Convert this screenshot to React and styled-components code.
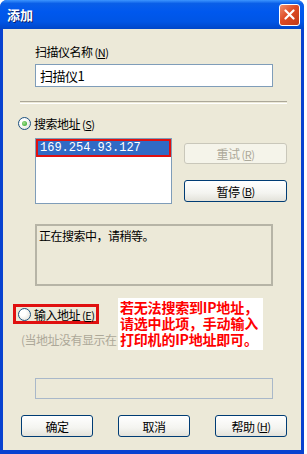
import styled, { createGlobalStyle } from "styled-components";

const GlobalStyle = createGlobalStyle`
  body {
    margin: 0;
    background: #ffffff;
    font-family: "Noto Sans CJK SC", "Liberation Sans", sans-serif;
    font-size: 12px;
    letter-spacing: -0.5px;
  }
`;

const Window = styled.div`
  width: 304px;
  height: 454px;
  display: flex;
  flex-direction: column;
  background: #0842d0;
  border-radius: 7px 7px 0 0;
  overflow: hidden;
`;

const TitleBar = styled.div`
  height: 29px;
  flex: none;
  display: flex;
  align-items: center;
  justify-content: space-between;
  padding: 0 4px 0 7px;
  background: linear-gradient(
    to bottom,
    #3d95ff 0%,
    #0a5fe8 12%,
    #0058ee 40%,
    #0055e5 75%,
    #0046c8 100%
  );
  color: #fff;
  font-weight: bold;
  font-size: 13px;
  letter-spacing: 0;
  text-shadow: 1px 1px 0 #0a1f6a;
`;

const CloseButton = styled.div`
  width: 19px;
  height: 20px;
  border: 1px solid #fff;
  border-radius: 3px;
  background: linear-gradient(135deg, #f08f6e 0%, #de4b24 45%, #c23a17 100%);
  display: flex;
  align-items: center;
  justify-content: center;
`;

const Body = styled.div`
  position: relative;
  flex: 1;
  margin: 0 3px 4px 3px;
  background: #ece9d8;
  display: flex;
  flex-direction: column;
  align-items: flex-start;
`;

const Label = styled.div`
  margin: 16px 0 0 32px;
  line-height: 14px;
  color: #000;
`;

const TextBox = styled.div`
  margin: ${(p) => p.$top}px 0 0 32px;
  width: 238px;
  height: ${(p) => p.$h}px;
  box-sizing: border-box;
  border: 1px solid ${(p) => (p.$disabled ? "#a9b8c9" : "#7f9db9")};
  background: ${(p) => (p.$disabled ? "#ece9d8" : "#fff")};
  padding: 3px 4px;
  line-height: 15px;
  font-size: 13px;
`;

const Separator = styled.div`
  margin: 14px 0 0 17px;
  width: 267px;
  height: 1px;
  border-top: 1px solid #aca899;
  border-bottom: 1px solid #fff;
`;

const RadioRow = styled.div`
  display: flex;
  align-items: center;
  gap: 3px;
  white-space: nowrap;
  margin: ${(p) => p.$top}px 0 0 ${(p) => p.$left}px;
  height: ${(p) => (p.$boxed ? 20 : 14)}px;
  box-sizing: border-box;
  padding: 0 ${(p) => (p.$boxed ? "2px 0 2px" : "0")};
  border: ${(p) => (p.$boxed ? "3px solid #e01010" : "none")};
`;

const RadioCircle = styled.span`
  width: 13px;
  height: 13px;
  flex: none;
  box-sizing: border-box;
  border-radius: 50%;
  border: 1px solid #1c5180;
  background: radial-gradient(circle at 35% 35%, #ffffff 30%, #dcdad0 100%);
  display: flex;
  align-items: center;
  justify-content: center;
  &::after {
    content: "";
    width: 5px;
    height: 5px;
    border-radius: 50%;
    background: ${(p) => (p.$checked ? "radial-gradient(circle at 40% 40%, #a6e08e, #21a121)" : "transparent")};
  }
`;

const Mnemonic = styled.span`
  margin-left: 2px;
  font-size: 11px;
  u {
    text-decoration: underline;
  }
`;

const SearchRow = styled.div`
  display: flex;
  margin: 8px 0 0 32px;
  gap: 12px;
`;

const ListBox = styled.div`
  width: 137px;
  height: 66px;
  box-sizing: border-box;
  border: 1px solid #7f9db9;
  background: #fff;
`;

const SelectedItem = styled.div`
  height: 18px;
  box-sizing: border-box;
  border: 2px solid #e01010;
  background: #316ac5;
  color: #fff;
  padding-left: 2px;
  font-family: "Liberation Mono", monospace;
  font-size: 12px;
  letter-spacing: 0;
  line-height: 14px;
`;

const ButtonColumn = styled.div`
  display: flex;
  flex-direction: column;
  gap: 16px;
  padding-top: 5px;
`;

const Button = styled.div`
  width: ${(p) => p.$w}px;
  height: ${(p) => p.$h}px;
  box-sizing: border-box;
  border-radius: 3px;
  border: 1px solid ${(p) => (p.$disabled ? "#c9c7ba" : "#003c74")};
  background: ${(p) =>
    p.$disabled
      ? "#f5f4ea"
      : "linear-gradient(to bottom, #ffffff 0%, #f4f4f0 60%, #e3e2da 100%)"};
  color: ${(p) => (p.$disabled ? "#aca899" : "#000")};
  display: flex;
  align-items: center;
  justify-content: center;
  font-size: 12px;
`;

const StatusBox = styled.div`
  margin: 20px 0 0 32px;
  width: 238px;
  height: 62px;
  box-sizing: border-box;
  border: 2px solid #b6b4a6;
  padding: 2px 2px;
  line-height: 16px;
  font-size: 12px;
`;

const HintText = styled.div`
  margin: 9px 0 0 18px;
  color: #aca899;
  line-height: 14px;
  white-space: nowrap;
`;

const Footer = styled.div`
  display: flex;
  gap: 25px;
  margin: 16px 0 0 18px;
`;

const Annotation = styled.div`
  position: absolute;
  left: 115px;
  top: 269px;
  width: 143px;
  padding: 1px 0 3px 2px;
  background: #fff;
  color: #ff0000;
  font-family: "Noto Sans CJK SC", serif;
  font-weight: bold;
  font-size: 14px;
  line-height: 16px;
  letter-spacing: -0.2px;
`;

const CloseIcon = () => (
  <svg width="11" height="11" viewBox="0 0 11 11">
    <path d="M1.5 1.5 L9.5 9.5 M9.5 1.5 L1.5 9.5" stroke="#fff" strokeWidth="2.2" strokeLinecap="round" />
  </svg>
);

const App = () => {
  return (
    <>
      <GlobalStyle />
      <Window>
        <TitleBar>
          <span>添加</span>
          <CloseButton>
            <CloseIcon />
          </CloseButton>
        </TitleBar>
        <Body>
          <Label>
            扫描仪名称<Mnemonic>(<u>N</u>)</Mnemonic>
          </Label>
          <TextBox $top={5} $h={23}>扫描仪1</TextBox>
          <Separator />
          <RadioRow $top={12} $left={15}>
            <RadioCircle $checked />
            <span>
              搜索地址<Mnemonic>(<u>S</u>)</Mnemonic>
            </span>
          </RadioRow>
          <SearchRow>
            <ListBox>
              <SelectedItem>169.254.93.127</SelectedItem>
            </ListBox>
            <ButtonColumn>
              <Button $w={103} $h={21} $disabled>
                重试<Mnemonic>(<u>R</u>)</Mnemonic>
              </Button>
              <Button $w={103} $h={22}>
                暂停<Mnemonic>(<u>B</u>)</Mnemonic>
              </Button>
            </ButtonColumn>
          </SearchRow>
          <StatusBox>正在搜索中，请稍等。</StatusBox>
          <RadioRow $top={18} $left={10} $boxed>
            <RadioCircle />
            <span>
              输入地址<Mnemonic>(<u>E</u>)</Mnemonic>
            </span>
          </RadioRow>
          <HintText>(当地址没有显示在</HintText>
          <TextBox $top={31} $h={21} $disabled />
          <Footer>
            <Button $w={72} $h={22}>确定</Button>
            <Button $w={72} $h={22}>取消</Button>
            <Button $w={72} $h={22}>
              帮助<Mnemonic>(<u>H</u>)</Mnemonic>
            </Button>
          </Footer>
          <Annotation>
            若无法搜索到IP地址，
            <br />
            请选中此项，手动输入
            <br />
            打印机的IP地址即可。
          </Annotation>
        </Body>
      </Window>
    </>
  );
};

export default App;
